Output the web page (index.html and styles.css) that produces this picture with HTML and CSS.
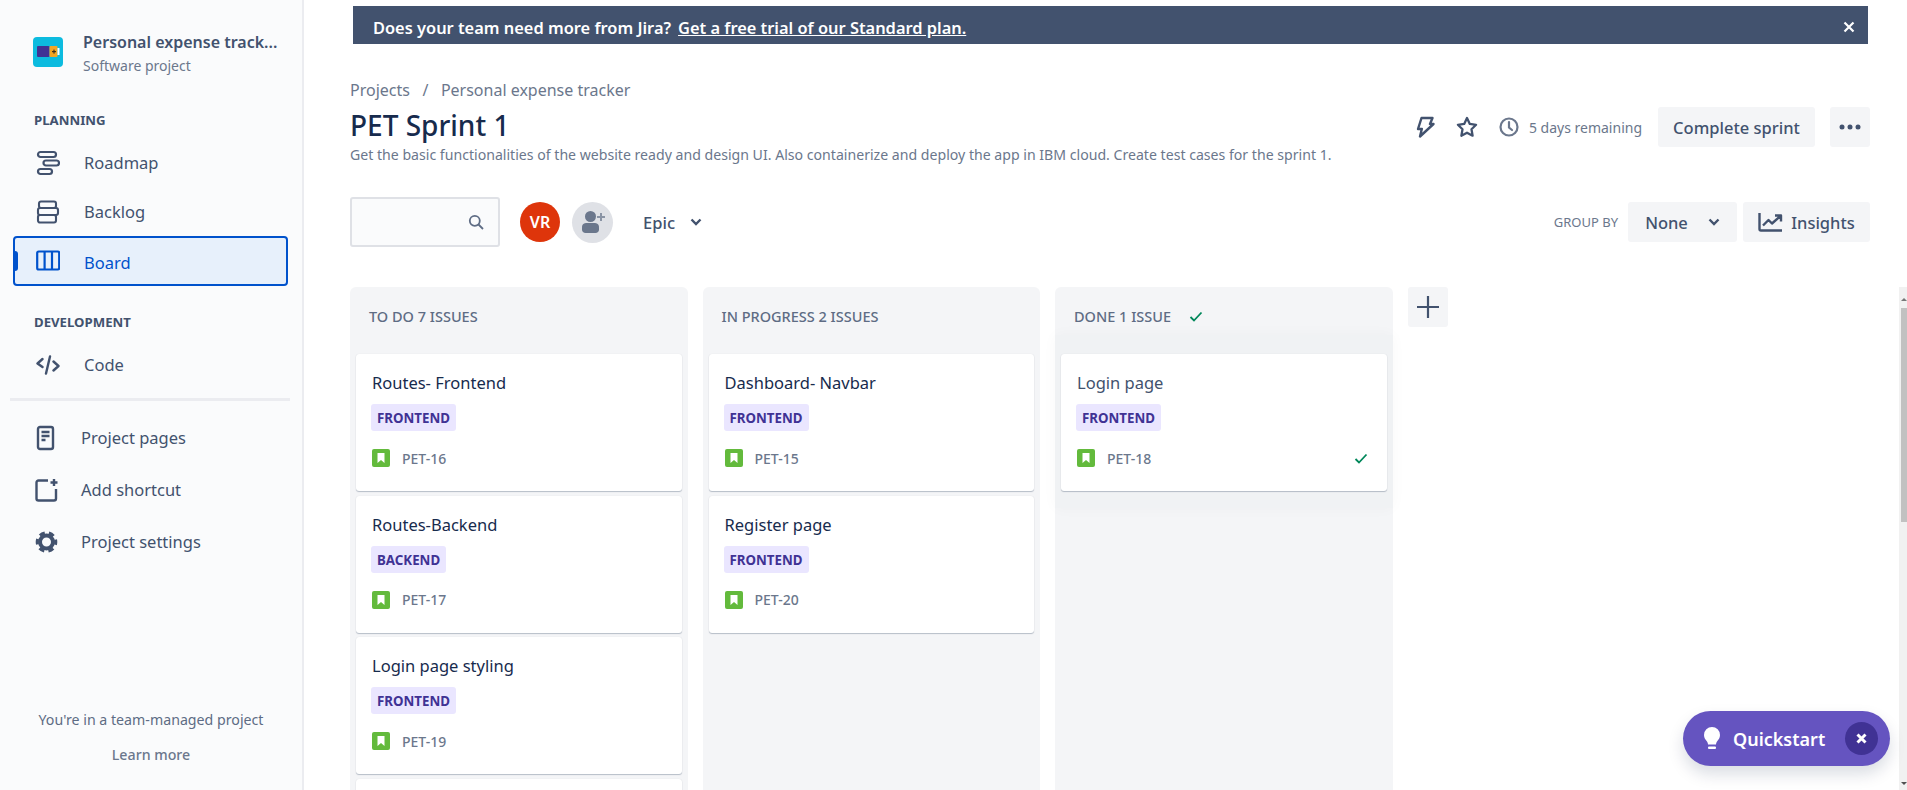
FILE: index.html
```html
<!DOCTYPE html>
<html>
<head>
  <title>PET Sprint 1</title>
  <link rel="stylesheet" href="styles.css">
</head>
<body>
<div class="app">

  <aside class="sidebar">
    <div class="project">
      <svg class="project-logo" width="30" height="30" viewBox="0 0 30 30">
        <rect width="30" height="30" rx="4" fill="#0cbbdf"/>
        <rect x="4" y="9" width="12.5" height="11" rx="1" fill="#403294"/>
        <rect x="16.5" y="9" width="8" height="11" rx="1" fill="#f5a623"/>
        <rect x="24.5" y="11" width="2" height="7" fill="#fff"/>
        <rect x="19" y="14" width="4" height="1.2" fill="#42301a"/>
        <rect x="20.4" y="12.6" width="1.2" height="4" fill="#42301a"/>
      </svg>
      <div>
        <div class="project-name">Personal expense track...</div>
        <div class="project-type">Software project</div>
      </div>
    </div>

    <div class="nav-heading">PLANNING</div>
    <a class="nav-item">
      <svg class="nav-icon" width="24" height="26" viewBox="0 0 24 26" fill="none" stroke="#42526e" stroke-width="2.2">
        <rect x="2" y="2" width="18" height="5" rx="2.5"/>
        <rect x="7.500" y="10.500" width="15.500" height="5" rx="2.5"/>
        <rect x="2" y="19" width="14" height="5" rx="2.5"/>
      </svg>
      <span>Roadmap</span>
    </a>
    <a class="nav-item nav-short">
      <svg class="nav-icon" width="24" height="24" viewBox="0 0 24 24" fill="none" stroke="#42526e" stroke-width="2.1">
        <rect x="3" y="1.500" width="17" height="6.500" rx="2"/>
        <rect x="2" y="8" width="20" height="7" rx="2"/>
        <rect x="2" y="15" width="18" height="7.500" rx="2"/>
      </svg>
      <span>Backlog</span>
    </a>
    <a class="nav-item nav-active">
      <svg class="nav-icon" width="24" height="22" viewBox="0 0 24 22" fill="none" stroke="#0052cc" stroke-width="2.2">
        <rect x="1.2" y="1.5" width="22" height="18" rx="1.5"/>
        <path d="M8.6 1.5v18M16 1.5v18"/>
      </svg>
      <span>Board</span>
    </a>

    <div class="nav-heading nav-heading-dev">DEVELOPMENT</div>
    <a class="nav-item">
      <svg class="nav-icon" width="24" height="20" viewBox="0 0 24 20" fill="none" stroke="#42526e" stroke-width="2.4" stroke-linecap="round" stroke-linejoin="round">
        <path d="M6.5 4 1.5 8.5 6.5 12M17.5 6.5l5 4.5-5 4.5M14 1.5 10 18.5"/>
      </svg>
      <span>Code</span>
    </a>

    <div class="nav-divider"></div>

    <a class="nav-item nav-tall">
      <svg class="nav-icon" width="24" height="26" viewBox="0 0 24 26" fill="none" stroke="#42526e" stroke-width="2.4">
        <rect x="3" y="2" width="15" height="22" rx="2"/>
        <path d="M6.5 7h8M6.5 11h8M6.5 15h4"/>
      </svg>
      <span>Project pages</span>
    </a>
    <a class="nav-item nav-tall">
      <svg class="nav-icon" width="24" height="24" viewBox="0 0 24 24" fill="none" stroke="#42526e" stroke-width="2.4">
        <path d="M13 2.500H3.500a2 2 0 0 0-2 2V20.500a2 2 0 0 0 2 2H19a2 2 0 0 0 2-2V11"/>
        <path d="M19 1v7M15.500 4.500h7"/>
      </svg>
      <span>Add shortcut</span>
    </a>
    <a class="nav-item nav-tall">
      <svg class="nav-icon" width="24" height="24" viewBox="0 0 24 24" fill="none" stroke="#42526e">
        <circle cx="11.500" cy="12" r="6.500" stroke-width="4"/>
        <circle cx="11.500" cy="12" r="9.300" stroke-width="3" stroke-dasharray="5.500 4.240" stroke-dashoffset="2.700"/>
      </svg>
      <span>Project settings</span>
    </a>

    <div class="sidebar-foot">
      <div>You're in a team-managed project</div>
      <div class="learn-more">Learn more</div>
    </div>
  </aside>

  <main class="main">
    <div class="banner">
      <span class="banner-text">Does your team need more from Jira?</span>
      <a class="banner-link">Get a free trial of our Standard plan.</a>
      <svg class="banner-close" width="12" height="12" viewBox="0 0 12 12" stroke="#fff" stroke-width="2.200">
        <path d="M1.500 1.500l9 9M10.500 1.500l-9 9"/>
      </svg>
    </div>

    <div class="breadcrumb">
      <span>Projects</span><span class="crumb-sep">/</span><span>Personal expense tracker</span>
    </div>

    <div class="page-head">
      <div>
        <h1 class="page-title">PET Sprint 1</h1>
        <p class="page-desc">Get the basic functionalities of the website ready and design UI. Also containerize and deploy the app in IBM cloud. Create test cases for the sprint 1.</p>
      </div>
      <div class="head-actions">
        <svg class="icon-bolt" width="20" height="22" viewBox="0 0 20 22" fill="none" stroke="#42526e" stroke-width="2.400" stroke-linejoin="round" stroke-linecap="round">
          <path d="M6.500 2H17.500L15 8h3.500L5 20.500 6.800 13H3z"/>
        </svg>
        <svg class="icon-star" width="22" height="22" viewBox="0 0 22 22" fill="none" stroke="#42526e" stroke-width="2.300" stroke-linejoin="round">
          <path d="M11 2l2.800 5.900 6.300.9-4.600 4.500 1.100 6.400L11 16.700l-5.600 3 1.100-6.400L1.900 8.800l6.300-.9z"/>
        </svg>
        <svg class="icon-clock" width="20" height="20" viewBox="0 0 20 20" fill="none" stroke="#6b778c" stroke-width="2.200">
          <circle cx="10" cy="10" r="8.500"/>
          <path d="M10 5v5.500l3 2.500" stroke-linecap="round"/>
        </svg>
        <span class="days-left">5 days remaining</span>
        <button class="btn btn-complete">Complete sprint</button>
        <button class="btn btn-more">
          <svg width="22" height="6" viewBox="0 0 22 6" fill="#42526e"><circle cx="3" cy="3" r="2.500"/><circle cx="11" cy="3" r="2.500"/><circle cx="19" cy="3" r="2.500"/></svg>
        </button>
      </div>
    </div>

    <div class="toolbar">
      <div class="search">
        <svg width="16" height="16" viewBox="0 0 16 16" fill="none" stroke="#5e6c84" stroke-width="1.800">
          <circle cx="6.800" cy="6.800" r="5"/><path d="M10.500 10.500 15 15"/>
        </svg>
      </div>
      <div class="avatar">VR</div>
      <div class="add-user">
        <svg width="24" height="24" viewBox="0 0 24 24" fill="#6b778c">
          <circle cx="9.500" cy="6.500" r="5.500"/>
          <path d="M1 17.500C1 14 3 13 6 13h7c3 0 5 1 5 4.500v2c0 2-1.500 3.500-3.500 3.500h-10C2.500 23 1 21.500 1 19.500z"/>
          <path d="M19 3h2v3h3v2h-3v3h-2V8h-3V6h3z" fill="#8993a4"/>
        </svg>
      </div>
      <div class="epic">
        <span>Epic</span>
        <svg width="12" height="8" viewBox="0 0 12 8" fill="none" stroke="#42526e" stroke-width="2.400"><path d="M1.500 1.500 6 6l4.500-4.500"/></svg>
      </div>
      <div class="group-by">
        <span class="group-label">GROUP BY</span>
        <button class="btn btn-none">
          <span>None</span>
          <svg width="12" height="8" viewBox="0 0 12 8" fill="none" stroke="#42526e" stroke-width="2.400"><path d="M1.500 1.500 6 6l4.500-4.500"/></svg>
        </button>
        <button class="btn btn-insights">
          <svg width="25" height="20" viewBox="0 0 25 20" fill="none" stroke="#42526e" stroke-width="2.400" stroke-linejoin="round">
            <path d="M1.500 1v16a1.500 1.500 0 0 0 1.500 1.500h21"/>
            <path d="M5 13.500 10.500 8l3.500 3.500L22 4.500M17 3.500h6v6"/>
          </svg>
          <span>Insights</span>
        </button>
      </div>
    </div>

    <div class="board">
      <section class="column">
        <div class="column-head">TO DO 7 ISSUES</div>
        <div class="card-list">
          <article class="card">
            <div class="card-title">Routes- Frontend</div>
            <span class="tag">FRONTEND</span>
            <div class="card-foot">
              <svg class="story-icon" width="18" height="18" viewBox="0 0 18 18"><rect width="18" height="18" rx="2" fill="#63ba3c"/><path d="M5.500 4h7v10L9 11l-3.500 3z" fill="#fff"/></svg>
              <span>PET-16</span>
            </div>
          </article>
          <article class="card">
            <div class="card-title">Routes-Backend</div>
            <span class="tag">BACKEND</span>
            <div class="card-foot">
              <svg class="story-icon" width="18" height="18" viewBox="0 0 18 18"><rect width="18" height="18" rx="2" fill="#63ba3c"/><path d="M5.500 4h7v10L9 11l-3.500 3z" fill="#fff"/></svg>
              <span>PET-17</span>
            </div>
          </article>
          <article class="card">
            <div class="card-title">Login page styling</div>
            <span class="tag">FRONTEND</span>
            <div class="card-foot">
              <svg class="story-icon" width="18" height="18" viewBox="0 0 18 18"><rect width="18" height="18" rx="2" fill="#63ba3c"/><path d="M5.500 4h7v10L9 11l-3.500 3z" fill="#fff"/></svg>
              <span>PET-19</span>
            </div>
          </article>
          <article class="card"></article>
        </div>
      </section>

      <section class="column">
        <div class="column-head">IN PROGRESS 2 ISSUES</div>
        <div class="card-list">
          <article class="card">
            <div class="card-title">Dashboard- Navbar</div>
            <span class="tag">FRONTEND</span>
            <div class="card-foot">
              <svg class="story-icon" width="18" height="18" viewBox="0 0 18 18"><rect width="18" height="18" rx="2" fill="#63ba3c"/><path d="M5.500 4h7v10L9 11l-3.500 3z" fill="#fff"/></svg>
              <span>PET-15</span>
            </div>
          </article>
          <article class="card">
            <div class="card-title">Register page</div>
            <span class="tag">FRONTEND</span>
            <div class="card-foot">
              <svg class="story-icon" width="18" height="18" viewBox="0 0 18 18"><rect width="18" height="18" rx="2" fill="#63ba3c"/><path d="M5.500 4h7v10L9 11l-3.500 3z" fill="#fff"/></svg>
              <span>PET-20</span>
            </div>
          </article>
        </div>
      </section>

      <section class="column column-done">
        <div class="column-head">
          <span>DONE 1 ISSUE</span>
          <svg width="14" height="11" viewBox="0 0 14 11" fill="none" stroke="#00875a" stroke-width="1.800"><path d="M1.500 6 5 9.500 12.500 1.500"/></svg>
        </div>
        <div class="done-zone">
          <article class="card">
            <div class="card-title card-title-done">Login page</div>
            <span class="tag">FRONTEND</span>
            <div class="card-foot">
              <svg class="story-icon" width="18" height="18" viewBox="0 0 18 18"><rect width="18" height="18" rx="2" fill="#63ba3c"/><path d="M5.500 4h7v10L9 11l-3.500 3z" fill="#fff"/></svg>
              <span>PET-18</span>
              <svg class="done-check" width="14" height="11" viewBox="0 0 14 11" fill="none" stroke="#00875a" stroke-width="1.800"><path d="M1.500 6 5 9.500 12.500 1.500"/></svg>
            </div>
          </article>
        </div>
      </section>

      <button class="add-column">
        <svg width="24" height="24" viewBox="0 0 24 24" stroke="#42526e" stroke-width="2.200"><path d="M12 1v22M1 12h22"/></svg>
      </button>
    </div>

    <div class="scrollbar">
      <span class="scroll-up"></span>
      <span class="scroll-thumb"></span>
      <span class="scroll-down"></span>
    </div>

    <div class="quickstart">
      <svg width="18" height="23" viewBox="0 0 18 23" fill="#fff">
        <path d="M9 0a8 8 0 0 0-8 8c0 3 1.500 4.500 3 6.500.7 1 1 2 1 3h8c0-1 .3-2 1-3 1.500-2 3-3.500 3-6.500a8 8 0 0 0-8-8z"/>
        <rect x="5" y="19.500" width="8" height="2.500" rx="1"/>
      </svg>
      <span class="quickstart-label">Quickstart</span>
      <span class="quickstart-close">
        <svg width="11" height="11" viewBox="0 0 11 11" stroke="#fff" stroke-width="3"><path d="M1.500 1.500l8 8M9.500 1.500l-8 8"/></svg>
      </span>
    </div>
  </main>
</div>
</body>
</html>
```

FILE: styles.css
```css
* {
  box-sizing: border-box;
}
html, body {
  margin: 0;
  height: 790px;
  overflow: hidden;
}
body {
  font-family: "Noto Sans", "Open Sans", sans-serif;
  background-color: #fff;
  color: #172b4d;
}
.app {
  display: flex;
  height: 790px;
}

/* sidebar */
.sidebar {
  width: 304px;
  flex-shrink: 0;
  display: flex;
  flex-direction: column;
  background-color: #fafbfc;
  border-right: 2px solid #ebecf0;
  padding-top: 30px;
}
.project {
  display: flex;
  align-items: flex-start;
  gap: 20px;
  padding-left: 33px;
}
.project-logo {
  margin-top: 7px;
}
.project-name {
  font-size: 16px;
  font-weight: 600;
  line-height: 24px;
  color: #42526e;
  white-space: nowrap;
}
.project-type {
  font-size: 14px;
  line-height: 20px;
  margin-top: 2px;
  color: #6b778c;
}
.nav-heading {
  font-size: 13.2px;
  font-weight: 700;
  line-height: 16px;
  color: #42526e;
  margin: 36px 0 10px 34px;
}
.nav-heading-dev {
  margin-top: 28px;
}
.nav-item {
  position: relative;
  display: flex;
  align-items: center;
  gap: 24px;
  height: 50px;
  margin: 0 14px 0 13px;
  padding-left: 23px;
  font-size: 16.5px;
  color: #42526e;
}
.nav-item span {
  margin-bottom: 2px;
}
.nav-short {
  height: 48px;
}
.nav-active span {
  margin-bottom: 0;
  margin-top: 2px;
}
.nav-tall {
  height: 52px;
  gap: 22px;
  padding-left: 22px;
}
.nav-active {
  background-color: #e7f0fb;
  border: 2px solid #0052cc;
  border-radius: 4px;
  padding-left: 21px;
  color: #0052cc;
}
.nav-active::before {
  content: "";
  position: absolute;
  left: -1px;
  top: 13px;
  width: 4px;
  height: 20px;
  background-color: #0052cc;
  border-radius: 0 3px 3px 0;
}
.nav-icon {
  flex-shrink: 0;
}
.nav-divider {
  height: 3px;
  margin: 8px 12px 11px 10px;
  background-color: #ebecf0;
}
.sidebar-foot {
  margin-top: auto;
  padding-bottom: 25px;
  text-align: center;
  font-size: 14.2px;
  line-height: 20px;
  color: #5e6c84;
}
.learn-more {
  margin-top: 15px;
  font-weight: 500;
  color: #6b778c;
}

/* main column */
.main {
  position: relative;
  flex: 1;
  min-width: 0;
  display: flex;
  flex-direction: column;
  padding: 6px 37px 0 46px;
}
.banner {
  display: flex;
  align-items: center;
  height: 38px;
  flex-shrink: 0;
  margin: 0 2px 0 3px;
  padding: 4px 13px 0 20px;
  background-color: #42526e;
  color: #fff;
  font-size: 16.4px;
  font-weight: 600;
}
.banner-link {
  margin-left: 7px;
  text-decoration: underline;
}
.banner-close {
  margin-left: auto;
}
.breadcrumb {
  margin-top: 36px;
  font-size: 16px;
  line-height: 20px;
  color: #6b778c;
}
.crumb-sep {
  margin: 0 12.5px;
}
.page-head {
  display: flex;
  justify-content: space-between;
  align-items: flex-start;
  margin-top: 7px;
}
.page-title {
  margin: 0;
  font-size: 28px;
  font-weight: 500;
  line-height: 36px;
  color: #172b4d;
}
.page-desc {
  margin: 3px 0 0;
  font-size: 14.12px;
  line-height: 18px;
  color: #6b778c;
  white-space: nowrap;
}
.head-actions {
  display: flex;
  align-items: center;
}
.icon-bolt {
  margin-right: 21px;
}
.icon-star {
  margin-right: 21px;
}
.days-left {
  margin: 0 16px 0 10px;
  font-size: 14px;
  color: #6b778c;
}
.btn {
  display: flex;
  align-items: center;
  justify-content: center;
  height: 40px;
  padding: 0;
  border: none;
  border-radius: 3px;
  background-color: #f4f5f7;
  color: #42526e;
  font-family: inherit;
  font-size: 16.5px;
  font-weight: 500;
}
.btn-complete {
  width: 157px;
}
.btn-more {
  width: 40px;
  margin-left: 15px;
}

/* filters */
.toolbar {
  display: flex;
  align-items: center;
  margin-top: 33px;
  height: 50px;
  flex-shrink: 0;
}
.search {
  display: flex;
  align-items: center;
  justify-content: flex-end;
  width: 150px;
  height: 50px;
  padding-right: 14px;
  background-color: #fafbfc;
  border: 2px solid #dfe1e6;
  border-radius: 3px;
}
.avatar {
  display: flex;
  align-items: center;
  justify-content: center;
  width: 40px;
  height: 40px;
  margin-left: 20px;
  border-radius: 50%;
  background-color: #de350b;
  color: #fff;
  font-size: 16px;
  font-weight: 600;
}
.add-user {
  display: flex;
  align-items: center;
  justify-content: center;
  width: 41px;
  height: 41px;
  margin-left: 12px;
  border-radius: 50%;
  background-color: #dfe1e6;
}
.epic {
  display: flex;
  align-items: center;
  gap: 15px;
  margin-left: 30px;
  font-size: 16.5px;
  font-weight: 500;
  color: #42526e;
}
.group-by {
  display: flex;
  align-items: center;
  margin-left: auto;
}
.group-label {
  margin-right: 10px;
  font-size: 13px;
  color: #6b778c;
}
.btn-none {
  width: 109px;
  gap: 20px;
}
.btn-insights {
  width: 127px;
  gap: 8px;
  margin-left: 6px;
}

/* board */
.board {
  flex: 1;
  min-height: 0;
  display: flex;
  align-items: stretch;
  gap: 15px;
  margin-top: 40px;
  overflow: hidden;
}
.column {
  width: 337.5px;
  flex-shrink: 0;
  padding: 0 6px;
  background-color: #f4f5f7;
  border-radius: 6px 6px 0 0;
  overflow: hidden;
}
.column-done {
  overflow: visible;
}
.column-head {
  display: flex;
  align-items: center;
  gap: 18px;
  height: 67px;
  padding: 0 0 9px 13px;
  font-size: 14.5px;
  font-weight: 500;
  color: #5e6c84;
}
.column-done .column-head {
  height: 48px;
  padding: 10px 0 0 13px;
}
.card-list {
  display: flex;
  flex-direction: column;
  gap: 4.6px;
}
.done-zone {
  margin: 0 -6px;
  padding: 19px 6px 17px;
  background-color: #f0f2f4;
  box-shadow: 0 0 14px rgba(9, 30, 66, 0.03);
}
.card {
  flex-shrink: 0;
  height: 137px;
  padding: 18px 16px 0;
  background-color: #fff;
  border-radius: 3px;
  box-shadow: 0 1px 1px rgba(9, 30, 66, 0.25), 0 0 1px rgba(9, 30, 66, 0.12);
}
.card-title {
  font-size: 16.5px;
  line-height: 22px;
  color: #172b4d;
}
.card-title-done {
  color: #42526e;
}
.tag {
  display: inline-block;
  height: 27px;
  margin: 10px 0 0 -1px;
  padding: 0 6px;
  border-radius: 3px;
  background-color: #eae6ff;
  color: #403294;
  font-size: 13.3px;
  font-weight: 700;
  line-height: 28px;
  vertical-align: top;
}
.card-foot {
  display: flex;
  align-items: center;
  gap: 12px;
  margin-top: 18px;
  height: 18px;
  font-size: 14px;
  font-weight: 500;
  color: #6b778c;
}
.done-check {
  margin-left: auto;
  margin-right: 3px;
}
.add-column {
  display: flex;
  align-items: center;
  justify-content: center;
  width: 40px;
  height: 40px;
  flex-shrink: 0;
  padding: 0;
  border: none;
  border-radius: 3px;
  background-color: #f4f5f7;
}

/* page scrollbar */
.scrollbar {
  position: absolute;
  top: 287px;
  right: 0;
  bottom: 0;
  width: 8px;
  background-color: #f1f1f1;
}
.scroll-thumb {
  position: absolute;
  top: 21px;
  right: 0;
  width: 6px;
  height: 214px;
  background-color: #c1c1c1;
}
.scroll-up, .scroll-down {
  position: absolute;
  left: 2px;
  width: 0;
  height: 0;
  border-left: 3px solid transparent;
  border-right: 3px solid transparent;
}
.scroll-up {
  top: 11px;
  border-bottom: 3px solid #777;
}
.scroll-down {
  bottom: 5px;
  border-top: 3px solid #505050;
}

/* quickstart pill */
.quickstart {
  position: absolute;
  right: 17px;
  bottom: 24px;
  display: flex;
  align-items: center;
  width: 207px;
  height: 55px;
  padding: 0 12px 0 20px;
  border-radius: 28px;
  background-color: #6554c0;
  color: #fff;
  box-shadow: 0 8px 16px rgba(9, 30, 66, 0.15);
}
.quickstart-label {
  margin-left: 12px;
  font-size: 18px;
  font-weight: 600;
}
.quickstart-close {
  display: flex;
  align-items: center;
  justify-content: center;
  width: 33px;
  height: 33px;
  margin-left: auto;
  border-radius: 50%;
  background-color: #403294;
}
```
